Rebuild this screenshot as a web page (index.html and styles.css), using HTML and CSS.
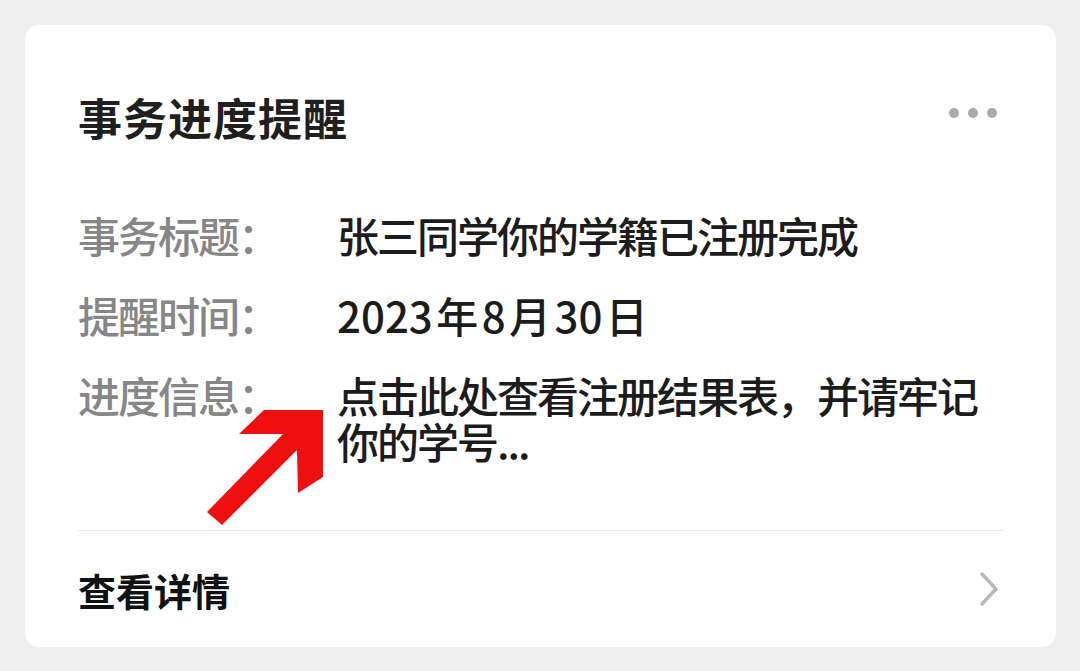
FILE: index.html
```html
<!DOCTYPE html>
<html lang="zh-CN">
<head>
  <meta charset="UTF-8">
  <meta name="viewport" content="width=device-width, initial-scale=1.0">
  <title>事务进度提醒</title>
  <link rel="stylesheet" href="styles.css">
</head>
<body>
  <div class="card">
    <div class="card-head">
      <h2 class="title">事务进度提醒</h2>
      <div class="more">
        <span></span>
        <span></span>
        <span></span>
      </div>
    </div>

    <div class="rows">
      <div class="row">
        <div class="label">事务标题：</div>
        <div class="value">张三同学你的学籍已注册完成</div>
      </div>
      <div class="row">
        <div class="label">提醒时间：</div>
        <div class="value date">2023 年 8 月 30 日</div>
      </div>
      <div class="row">
        <div class="label">进度信息：</div>
        <div class="value">点击此处查看注册结果表，并请牢记你的学号...</div>
      </div>
    </div>

    <div class="footer">
      <span class="link">查看详情</span>
      <svg class="chevron" width="20" height="36" viewBox="0 0 20 36">
        <path d="M3 3 L17 18 L3 33" fill="none" stroke="#b8b8b8" stroke-width="3.5" stroke-linecap="round" stroke-linejoin="round"/>
      </svg>
    </div>

    <svg class="arrow" width="116" height="115" viewBox="207 410 116 115">
      <polygon points="264,410 323,410 323,477 298,493 297,450 222,525 207,512 283,434 239,434" fill="#ee0f0f"/>
    </svg>
  </div>
</body>
</html>
```

FILE: styles.css
```css
* {
  margin: 0;
  padding: 0;
  box-sizing: border-box;
}

body {
  background: #eeeeee;
  padding: 25px;
  font-family: "Noto Sans CJK SC", "Noto Sans", sans-serif;
}

.card {
  position: relative;
  width: 1031px;
  height: 622px;
  background: #fff;
  border-radius: 14px;
  padding: 0 51px 0 53px;
}

.card-head {
  display: flex;
  justify-content: space-between;
  align-items: center;
  padding-top: 68px;
  height: 116px;
}

.title {
  font-size: 44px;
  line-height: 48px;
  font-weight: 700;
  color: #1f1f1f;
  letter-spacing: 1px;
}

.more {
  display: flex;
  gap: 9px;
  margin-right: 8px;
  margin-top: -8px;
}

.more span {
  width: 10px;
  height: 10px;
  border-radius: 50%;
  background: #ababab;
}

.rows {
  display: flex;
  flex-direction: column;
  gap: 34px;
  margin-top: 71px;
}

.row {
  display: flex;
  font-size: 42px;
  line-height: 46px;
  letter-spacing: -2px;
}

.label {
  width: 259px;
  flex-shrink: 0;
  color: #868686;
  font-weight: 500;
}

.value {
  flex: 1;
  color: #1c1c1c;
  font-weight: 500;
}

.value.date {
  letter-spacing: 0;
  word-spacing: -6px;
}

.footer {
  margin-top: 66px;
  border-top: 1px solid #e9e9e9;
  height: 117px;
  display: flex;
  justify-content: space-between;
  align-items: center;
}

.link {
  font-size: 38px;
  font-weight: 700;
  color: #111;
}

.chevron {
  margin-right: 6px;
}

.arrow {
  position: absolute;
  left: 182px;
  top: 385px;
}
```
